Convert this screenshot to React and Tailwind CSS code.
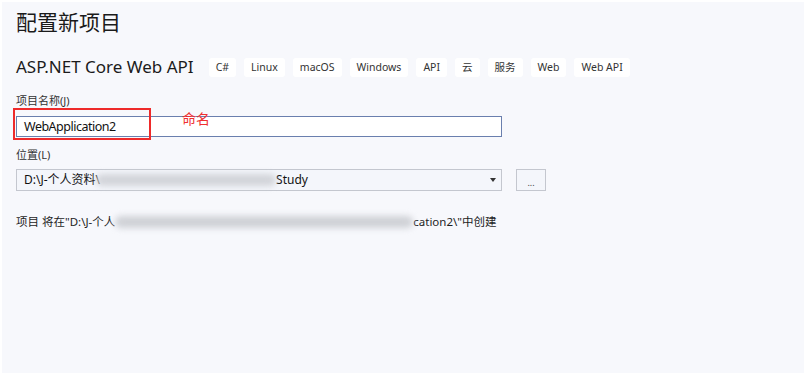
import React from "react";

const tags = ["C#", "Linux", "macOS", "Windows", "API", "云", "服务", "Web", "Web API"];

const font = { fontFamily: '"Noto Sans", "Noto Sans CJK SC", sans-serif' };

export default function App() {
  return (
    <div
      className="w-[804px] h-[373px] bg-white pt-[2px] pl-[2px] overflow-hidden"
      style={font}
    >
      <div className="h-full bg-[#f7f8fc] pl-[14px] text-[#1e1e1e]">
        <h1 className="pt-[5px] text-[21px] leading-[30px] font-normal text-[#1b1b1b]">配置新项目</h1>

        <div className="mt-[19px] flex items-center">
          <span className="text-[17px] leading-[22px] text-[#1b1b1b]">ASP.NET Core Web API</span>
          <div className="ml-[15px] flex gap-[8px]">
            {tags.map((t) => (
              <span
                key={t}
                className="h-[19px] px-[7px] rounded-[3px] bg-white text-[10.5px] leading-[19px] text-[#333]"
              >
                {t}
              </span>
            ))}
          </div>
        </div>

        <div className="mt-[16px] text-[11px] leading-[14px] text-[#333]">项目名称(J)</div>
        <div className="relative mt-[8px] w-[486px]">
          <div className="h-[21px] border border-[#6a7fae] bg-white pl-[7px] text-[12.5px] tracking-[-0.5px] leading-[19px] text-[#111]">
            WebApplication2
          </div>
          <div className="absolute left-[-3px] top-[-8px] w-[138px] h-[32px] border-2 border-[#ee2a2a]" />
          <span className="absolute left-[166px] top-[-6px] text-[14px] leading-[18px] text-[#f03030]">命名</span>
        </div>

        <div className="mt-[11px] text-[11px] leading-[14px] text-[#333]">位置(L)</div>
        <div className="mt-[7px] flex items-center">
          <div className="w-[486px] h-[22px] border border-[#c4c7cf] bg-[#f4f6fb] flex items-center pl-[7px] pr-[5px] text-[12px] text-[#111]">
            <span>D:\J-个人资料\</span>
            <span className="inline-block w-[180px] h-[12px] ml-[-4px] bg-[#d2d4d9] rounded-full blur-[3px]" />
            <span>Study</span>
            <span className="ml-auto w-0 h-0 border-l-[3px] border-r-[3px] border-t-[4px] border-l-transparent border-r-transparent border-t-[#333]" />
          </div>
          <div className="ml-[14px] w-[30px] h-[22px] border border-[#c4c7cf] bg-[#f4f6fb] flex items-end justify-center pb-[3px] text-[9px] leading-[9px] text-[#444]">
            ...
          </div>
        </div>

        <div className="mt-[23px] flex items-center text-[11.5px] leading-[16px] text-[#1e1e1e]">
          <span>项目 将在"D:\J-个人</span>
          <span className="inline-block w-[298px] h-[12px] bg-[#cfd1d6] rounded-full blur-[3px]" />
          <span>cation2\"中创建</span>
        </div>
      </div>
    </div>
  );
}
